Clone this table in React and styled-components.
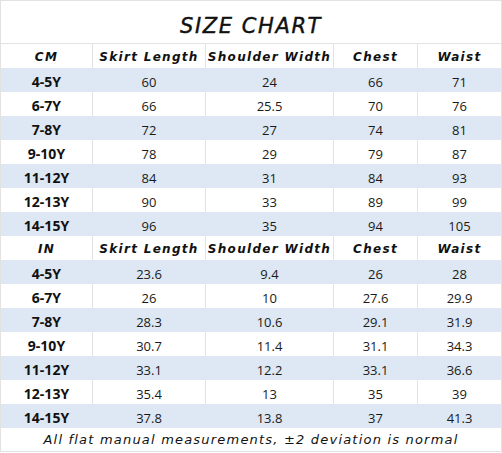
import React from "react";
import styled, { createGlobalStyle } from "styled-components";

const GlobalStyle = createGlobalStyle`
  html, body {
    margin: 0;
    padding: 0;
    background: #ffffff;
  }
`;

const SCChart = styled.div`
  width: 502px;
  box-sizing: border-box;
  border: 1px solid #e2e2e2;
  background: #ffffff;
  font-family: "Open Sans", "Liberation Sans", sans-serif;
  color: #1a1a1a;
`;

const SCTitle = styled.div`
  height: 43px;
  border-bottom: 1px solid #e2e2e2;
  display: flex;
  align-items: flex-end;
  justify-content: center;
  padding-bottom: 5px;
  box-sizing: border-box;
  font-family: "DejaVu Sans", sans-serif;
  font-style: italic;
  font-size: 21px;
  letter-spacing: 1.6px;
  -webkit-text-stroke: 0.4px #111;
  color: #111;
`;

const SCRow = styled.div`
  display: grid;
  grid-template-columns: 91px 113px 128px 84px 1fr;
  height: 24px;
  background: ${(props) => (props.shaded ? "#dde8f4" : "#ffffff")};
`;

const SCCell = styled.div`
  display: flex;
  align-items: center;
  justify-content: center;
  padding-top: 3px;
  box-sizing: border-box;
  font-size: 13px;
  border-left: ${(props) =>
    props.divider ? "1px solid #e2e2e2" : "1px solid transparent"};
  &:first-child {
    border-left: none;
  }
`;

const SCHead = styled(SCCell)`
  padding-top: 1px;
  font-family: "DejaVu Sans", sans-serif;
  font-style: italic;
  font-weight: bold;
  font-size: 12px;
  letter-spacing: 1.3px;
  color: #111;
`;

const SCLabel = styled(SCCell)`
  font-weight: 700;
  font-size: 14px;
  color: #111;
`;

const SCFooter = styled.div`
  height: 23px;
  display: flex;
  align-items: center;
  justify-content: center;
  font-family: "DejaVu Sans", sans-serif;
  font-style: italic;
  font-size: 13px;
  letter-spacing: 1.2px;
  color: #111;
`;

const headers = ["Skirt Length", "Shoulder Width", "Chest", "Waist"];

const sections = [
  {
    unit: "CM",
    rows: [
      ["4-5Y", "60", "24", "66", "71"],
      ["6-7Y", "66", "25.5", "70", "76"],
      ["7-8Y", "72", "27", "74", "81"],
      ["9-10Y", "78", "29", "79", "87"],
      ["11-12Y", "84", "31", "84", "93"],
      ["12-13Y", "90", "33", "89", "99"],
      ["14-15Y", "96", "35", "94", "105"],
    ],
  },
  {
    unit: "IN",
    rows: [
      ["4-5Y", "23.6", "9.4", "26", "28"],
      ["6-7Y", "26", "10", "27.6", "29.9"],
      ["7-8Y", "28.3", "10.6", "29.1", "31.9"],
      ["9-10Y", "30.7", "11.4", "31.1", "34.3"],
      ["11-12Y", "33.1", "12.2", "33.1", "36.6"],
      ["12-13Y", "35.4", "13", "35", "39"],
      ["14-15Y", "37.8", "13.8", "37", "41.3"],
    ],
  },
];

function App() {
  return (
    <>
      <GlobalStyle />
      <SCChart>
        <SCTitle>SIZE CHART</SCTitle>
        {sections.map((section) => (
          <React.Fragment key={section.unit}>
            <SCRow>
              <SCHead divider>{section.unit}</SCHead>
              {headers.map((h) => (
                <SCHead key={h} divider>
                  {h}
                </SCHead>
              ))}
            </SCRow>
            {section.rows.map((row, i) => {
              const shaded = i % 2 === 0;
              return (
                <SCRow key={row[0]} shaded={shaded}>
                  <SCLabel divider={!shaded}>{row[0]}</SCLabel>
                  {row.slice(1).map((v, j) => (
                    <SCCell key={j} divider={!shaded}>
                      {v}
                    </SCCell>
                  ))}
                </SCRow>
              );
            })}
          </React.Fragment>
        ))}
        <SCFooter>All flat manual measurements, ±2 deviation is normal</SCFooter>
      </SCChart>
    </>
  );
}

export default App;
